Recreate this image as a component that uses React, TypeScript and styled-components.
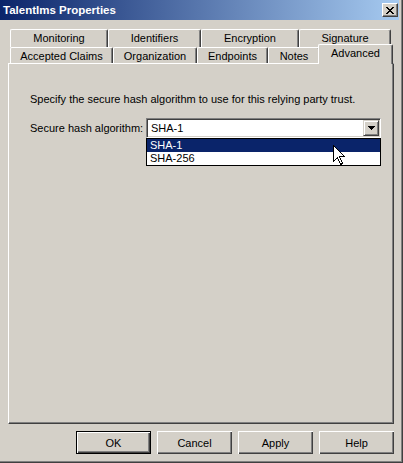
import styled, { createGlobalStyle } from 'styled-components';

const GlobalStyle = createGlobalStyle`
  html, body {
    margin: 0;
    padding: 0;
    background: #d4d0c8;
  }

  body {
    font-family: "Liberation Sans", Arial, sans-serif;
    font-size: 11px;
    color: #000;
  }
`;

const Window = styled.div`
  position: relative;
  width: 403px;
  height: 463px;
  box-sizing: border-box;
  background: #d4d0c8;
  border-right: 1px solid #404040;
  border-bottom: 1px solid #404040;
  box-shadow: inset -1px -1px 0 #808080;
  padding: 0 3px 3px 0;
  display: flex;
  flex-direction: column;
`;

const TitleBar = styled.div`
  height: 20px;
  flex: 0 0 20px;
  display: flex;
  align-items: flex-start;
  justify-content: space-between;
  padding: 0 1px 0 3px;
  background: linear-gradient(to right, #0a246a, #a6caf0);
`;

const Title = styled.span`
  color: #fff;
  font-weight: bold;
  font-size: 11.5px;
  line-height: 20px;
`;

const CaptionButton = styled.div`
  margin-top: 3px;
  width: 16px;
  height: 14px;
  box-sizing: border-box;
  background: #d4d0c8;
  border-top: 1px solid #fff;
  border-left: 1px solid #fff;
  border-right: 1px solid #404040;
  border-bottom: 1px solid #404040;
  box-shadow: inset -1px -1px 0 #808080;
  display: flex;
  align-items: center;
  justify-content: center;
`;

const Body = styled.div`
  padding: 9px 5px 0 8px;
  display: flex;
  flex-direction: column;
`;

const TabRow = styled.div<{ $h: number }>`
  display: flex;
  height: ${p => p.$h}px;
  margin: 0 2px;
`;

const Tab = styled.div<{ $w: number; $active?: boolean }>`
  position: relative;
  flex: 0 0 ${p => p.$w}px;
  box-sizing: border-box;
  height: ${p => (p.$active ? '20px' : 'auto')};
  margin: ${p => (p.$active ? '-3px -2px 0' : '0')};
  z-index: ${p => (p.$active ? 1 : 0)};
  background: #d4d0c8;
  border-top: 1px solid #fff;
  border-left: 1px solid #fff;
  border-right: 1px solid #404040;
  box-shadow: inset -1px 0 0 #808080;
  border-top-left-radius: 2px;
  border-top-right-radius: 2px;
  display: flex;
  justify-content: center;
  align-items: flex-start;
  padding-top: 2px;
  line-height: 13px;
  white-space: nowrap;
`;

const Panel = styled.div`
  height: 361px;
  box-sizing: border-box;
  border-top: 1px solid #fff;
  border-left: 1px solid #fff;
  border-right: 1px solid #404040;
  border-bottom: 1px solid #404040;
  box-shadow: inset -1px -1px 0 #808080;
  padding: 29px 0 0 21px;
`;

const Intro = styled.div`
  line-height: 13px;
`;

const Field = styled.div`
  display: flex;
  align-items: center;
  margin-top: 12px;
`;

const Label = styled.label`
  flex: 0 0 116px;
  line-height: 13px;
`;

const ComboWrap = styled.div`
  position: relative;
  width: 235px;
`;

const Combo = styled.div`
  height: 20px;
  box-sizing: border-box;
  background: #fff;
  border-top: 1px solid #808080;
  border-left: 1px solid #808080;
  border-right: 1px solid #fff;
  border-bottom: 1px solid #fff;
  box-shadow: inset 1px 1px 0 #404040, inset -1px -1px 0 #d4d0c8;
  display: flex;
  align-items: center;
  padding: 2px 2px 2px 4px;
  line-height: 13px;
`;

const ComboValue = styled.span`
  flex: 1;
`;

const ArrowButton = styled.div`
  width: 16px;
  height: 16px;
  box-sizing: border-box;
  margin-right: -1px;
  background: #d4d0c8;
  border-top: 1px solid #d4d0c8;
  border-left: 1px solid #d4d0c8;
  border-right: 1px solid #404040;
  border-bottom: 1px solid #404040;
  box-shadow: inset 1px 1px 0 #fff, inset -1px -1px 0 #808080;
  display: flex;
  align-items: center;
  justify-content: center;
`;

const DropList = styled.ul`
  position: absolute;
  top: 100%;
  left: 0;
  right: 0;
  margin: 0;
  padding: 0;
  list-style: none;
  background: #fff;
  border: 1px solid #000;
  z-index: 2;
`;

const Option = styled.li<{ $selected?: boolean }>`
  height: 13px;
  line-height: 13px;
  padding: 0 3px;
  background: ${p => (p.$selected ? '#0a246a' : '#fff')};
  color: ${p => (p.$selected ? '#fff' : '#000')};
`;

const Pointer = styled.svg`
  position: absolute;
  left: 186px;
  top: 6px;
  z-index: 3;
`;

const ButtonRow = styled.div`
  display: flex;
  justify-content: flex-end;
  gap: 6px;
  margin-top: 7px;
`;

const Button = styled.button<{ $default?: boolean }>`
  width: 75px;
  height: 23px;
  box-sizing: border-box;
  padding: 0;
  font-family: inherit;
  font-size: 11px;
  color: #000;
  background: #d4d0c8;
  border: ${p => (p.$default ? '1px solid #000' : 'none')};
  box-shadow: ${p =>
    p.$default
      ? 'inset 1px 1px 0 #fff, inset -1px -1px 0 #404040, inset -2px -2px 0 #808080'
      : 'inset 1px 1px 0 #fff, inset -1px -1px 0 #404040, inset -2px -2px 0 #808080'};
`;

const topTabs = [
  { label: 'Monitoring', w: 98 },
  { label: 'Identifiers', w: 93 },
  { label: 'Encryption', w: 98 },
  { label: 'Signature', w: 92 },
];

const frontTabs = [
  { label: 'Accepted Claims', w: 103 },
  { label: 'Organization', w: 84 },
  { label: 'Endpoints', w: 71 },
  { label: 'Notes', w: 52 },
  { label: 'Advanced', w: 75, active: true },
];

const App = () => (
  <>
    <GlobalStyle />
    <Window>
      <TitleBar>
        <Title>TalentIms Properties</Title>
        <CaptionButton>
          <svg width="8" height="7" viewBox="0 0 8 7" shapeRendering="crispEdges">
            <path d="M0 0h2v1H0zM6 0h2v1H6zM1 1h2v1H1zM5 1h2v1H5zM2 2h4v1H2zM3 3h2v1H3zM2 4h4v1H2zM1 5h2v1H1zM5 5h2v1H5zM0 6h2v1H0zM6 6h2v1H6z" fill="#000" />
          </svg>
        </CaptionButton>
      </TitleBar>
      <Body>
        <TabRow $h={18}>
          {topTabs.map(t => (
            <Tab key={t.label} $w={t.w}>{t.label}</Tab>
          ))}
        </TabRow>
        <TabRow $h={16}>
          {frontTabs.map(t => (
            <Tab key={t.label} $w={t.w} $active={t.active}>{t.label}</Tab>
          ))}
        </TabRow>
        <Panel>
          <Intro>Specify the secure hash algorithm to use for this relying party trust.</Intro>
          <Field>
            <Label>Secure hash algorithm:</Label>
            <ComboWrap>
              <Combo>
                <ComboValue>SHA-1</ComboValue>
                <ArrowButton>
                  <svg width="7" height="4" viewBox="0 0 7 4" shapeRendering="crispEdges">
                    <path d="M0 0h7v1H0zM1 1h5v1H1zM2 2h3v1H2zM3 3h1v1H3z" fill="#000" />
                  </svg>
                </ArrowButton>
              </Combo>
              <DropList>
                <Option $selected>SHA-1</Option>
                <Option>SHA-256</Option>
                <Pointer width="13" height="21" viewBox="0 0 13 21">
                  <path
                    d="M0.5 0.5 L0.5 16.5 L4.5 12.5 L7.5 19.5 L9.5 18.5 L6.5 11.5 L11.5 11.5 Z"
                    fill="#fff"
                    stroke="#000"
                    strokeWidth="1"
                    shapeRendering="crispEdges"
                  />
                </Pointer>
              </DropList>
            </ComboWrap>
          </Field>
        </Panel>
        <ButtonRow>
          <Button $default>OK</Button>
          <Button>Cancel</Button>
          <Button>Apply</Button>
          <Button>Help</Button>
        </ButtonRow>
      </Body>
    </Window>
  </>
);

export default App;
